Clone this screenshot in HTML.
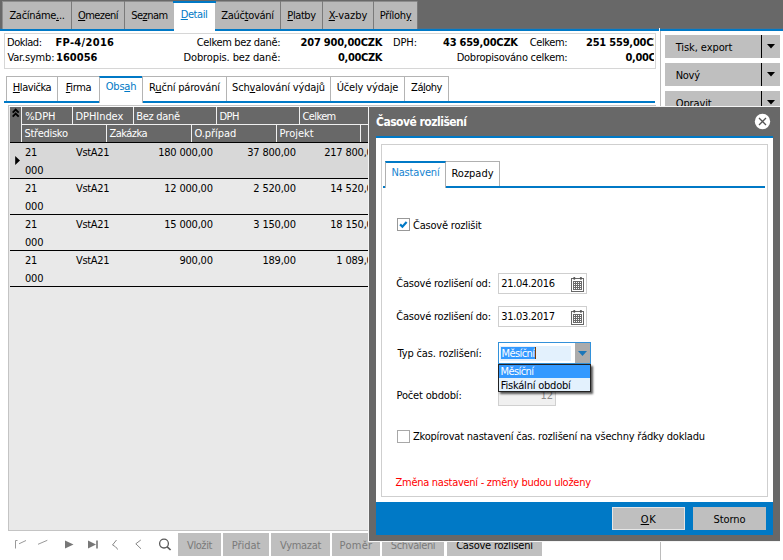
<!DOCTYPE html>
<html lang="cs"><head><meta charset="utf-8"><title>Časové rozlišení</title>
<style>
html,body{margin:0;padding:0;background:#fff;}
body{width:783px;height:560px;position:relative;overflow:hidden;font-family:"DejaVu Sans Condensed","Liberation Sans",sans-serif;font-size:11px;}
div,span.t,svg{position:absolute;}
span.t{white-space:nowrap;font-size:11px;}
span.c{text-align:center;}
span.b{font-weight:bold;}
u{text-decoration:underline;text-underline-offset:1px;}
</style></head><body>
<div style="left:0px;top:0px;width:783px;height:29px;background:#686868;"></div>
<div style="left:0px;top:28px;width:783px;height:1px;background:#5a6d7c;"></div>
<div style="left:3px;top:1px;width:415px;height:28px;background:#7a7a7a;"></div>
<div style="left:3px;top:2px;width:68px;height:27px;background:#b9b9b9;"></div>
<div style="left:3px;top:1px;width:68px;height:1px;background:#8d8d8d;"></div>
<div style="left:72px;top:2px;width:52px;height:27px;background:#b9b9b9;"></div>
<div style="left:72px;top:1px;width:52px;height:1px;background:#8d8d8d;"></div>
<div style="left:125px;top:2px;width:49px;height:27px;background:#b9b9b9;"></div>
<div style="left:125px;top:1px;width:49px;height:1px;background:#8d8d8d;"></div>
<div style="left:215px;top:2px;width:65px;height:27px;background:#b9b9b9;"></div>
<div style="left:215px;top:1px;width:65px;height:1px;background:#8d8d8d;"></div>
<div style="left:281px;top:2px;width:41px;height:27px;background:#b9b9b9;"></div>
<div style="left:281px;top:1px;width:41px;height:1px;background:#8d8d8d;"></div>
<div style="left:323px;top:2px;width:50px;height:27px;background:#b9b9b9;"></div>
<div style="left:323px;top:1px;width:50px;height:1px;background:#8d8d8d;"></div>
<div style="left:374px;top:2px;width:43px;height:27px;background:#b9b9b9;"></div>
<div style="left:374px;top:1px;width:43px;height:1px;background:#8d8d8d;"></div>
<div style="left:0px;top:29px;width:783px;height:2px;background:#0079c6;"></div>
<div style="left:173px;top:1px;width:43px;height:2px;background:#0079c6;"></div>
<div style="left:174px;top:3px;width:41px;height:28px;background:#fff;"></div>
<div style="left:2px;top:1px;width:1px;height:28px;background:#8d8d8d;"></div>
<span class="t" style="top:9px;line-height:13px;font-size:11px;color:#000;left:3px;width:68px;text-align:center;letter-spacing:-0.303px;">Začínáme<u>.</u>..</span>
<span class="t" style="top:9px;line-height:13px;font-size:11px;color:#000;left:72px;width:52px;text-align:center;letter-spacing:-0.555px;"><u>O</u>mezení</span>
<span class="t" style="top:9px;line-height:13px;font-size:11px;color:#000;left:125px;width:49px;text-align:center;letter-spacing:-0.512px;">Se<u>z</u>nam</span>
<span class="t" style="top:8px;line-height:13px;font-size:11px;color:#0079c6;left:173px;width:42px;text-align:center;letter-spacing:-0.431px;"><u>D</u>etail</span>
<span class="t" style="top:9px;line-height:13px;font-size:11px;color:#000;left:215px;width:65px;text-align:center;letter-spacing:-0.299px;">Zaúč<u>t</u>ování</span>
<span class="t" style="top:9px;line-height:13px;font-size:11px;color:#000;left:281px;width:41px;text-align:center;letter-spacing:-0.412px;"><u>P</u>latby</span>
<span class="t" style="top:9px;line-height:13px;font-size:11px;color:#000;left:323px;width:50px;text-align:center;letter-spacing:-0.003px;"><u>X</u>-vazby</span>
<span class="t" style="top:9px;line-height:13px;font-size:11px;color:#000;left:374px;width:43px;text-align:center;letter-spacing:-0.255px;">Příloh<u>y</u></span>
<div style="left:4px;top:33px;width:652px;height:36px;background:#fff;border:1px solid #d6d6d6;box-sizing:border-box;overflow:hidden;"></div>
<span class="t" style="top:36px;line-height:13px;font-size:11px;color:#000;left:7px;letter-spacing:-0.474px;">Doklad:</span>
<span class="t" style="top:36px;line-height:13px;font-size:11px;color:#000;left:55.5px;font-weight:bold;font-family:'DejaVu Sans Condensed','Liberation Sans',sans-serif;letter-spacing:0.314px;">FP-4/2016</span>
<span class="t" style="top:51px;line-height:13px;font-size:11px;color:#000;left:7.5px;letter-spacing:-0.182px;">Var.symb:</span>
<span class="t" style="top:51px;line-height:13px;font-size:11px;color:#000;left:56px;font-weight:bold;font-family:'DejaVu Sans Condensed','Liberation Sans',sans-serif;letter-spacing:0.034px;">160056</span>
<span class="t" style="top:36px;line-height:13px;font-size:11px;color:#000;right:502.5px;letter-spacing:-0.329px;margin-right:0.329px;">Celkem bez daně:</span>
<span class="t" style="top:51px;line-height:13px;font-size:11px;color:#000;right:502.5px;letter-spacing:-0.115px;margin-right:0.115px;">Dobropis. bez daně:</span>
<span class="t" style="top:36px;line-height:13px;font-size:11px;color:#000;right:400.5px;font-weight:bold;font-family:'DejaVu Sans Condensed','Liberation Sans',sans-serif;letter-spacing:-0.201px;margin-right:0.201px;">207 900,00CZK</span>
<span class="t" style="top:51px;line-height:13px;font-size:11px;color:#000;right:400.5px;font-weight:bold;font-family:'DejaVu Sans Condensed','Liberation Sans',sans-serif;letter-spacing:-0.339px;margin-right:0.339px;">0,00CZK</span>
<span class="t" style="top:36px;line-height:13px;font-size:11px;color:#000;left:393px;letter-spacing:-0.125px;">DPH:</span>
<span class="t" style="top:36px;line-height:13px;font-size:11px;color:#000;right:265px;font-weight:bold;font-family:'DejaVu Sans Condensed','Liberation Sans',sans-serif;letter-spacing:-0.229px;margin-right:0.229px;">43 659,00CZK</span>
<span class="t" style="top:36px;line-height:13px;font-size:11px;color:#000;right:215.29999999999995px;letter-spacing:-0.362px;margin-right:0.362px;">Celkem:</span>
<span class="t" style="top:51px;line-height:13px;font-size:11px;color:#000;right:215.29999999999995px;letter-spacing:-0.258px;margin-right:0.258px;">Dobropisováno celkem:</span>
<div style="left:570px;top:34px;width:84px;height:34px;overflow:hidden;">
<span class="t" style="top:2px;line-height:13px;font-size:11px;color:#000;left:16px;font-weight:bold;font-family:'DejaVu Sans Condensed','Liberation Sans',sans-serif;letter-spacing:-0.201px;">251 559,00CZK</span>
<span class="t" style="top:17px;line-height:13px;font-size:11px;color:#000;left:55.5px;font-weight:bold;font-family:'DejaVu Sans Condensed','Liberation Sans',sans-serif;letter-spacing:-0.339px;">0,00CZK</span>
</div>
<div style="left:659px;top:28px;width:1px;height:3px;background:#fff;"></div>
<div style="left:660px;top:31px;width:1px;height:529px;background:#bcbcbc;"></div>
<div style="left:665px;top:35px;width:115px;height:23px;background:#bfbfbf;"></div>
<div style="left:761px;top:35px;width:1px;height:23px;background:#000;"></div>
<svg style="left:767px;top:44px" width="8" height="5" viewBox="0 0 8 5"><path d="M0 0H8L4 4.5Z" fill="#000"/></svg>
<span class="t" style="top:41px;line-height:13px;font-size:11px;color:#000;left:675.75px;letter-spacing:-0.084px;">Tisk, export</span>
<div style="left:665px;top:63px;width:115px;height:23px;background:#bfbfbf;"></div>
<div style="left:761px;top:63px;width:1px;height:23px;background:#000;"></div>
<svg style="left:767px;top:72px" width="8" height="5" viewBox="0 0 8 5"><path d="M0 0H8L4 4.5Z" fill="#000"/></svg>
<span class="t" style="top:69px;line-height:13px;font-size:11px;color:#000;left:675.75px;letter-spacing:-0.307px;">Nový</span>
<div style="left:665px;top:91px;width:115px;height:23px;background:#bfbfbf;"></div>
<div style="left:761px;top:91px;width:1px;height:23px;background:#000;"></div>
<svg style="left:767px;top:100px" width="8" height="5" viewBox="0 0 8 5"><path d="M0 0H8L4 4.5Z" fill="#000"/></svg>
<span class="t" style="top:97px;line-height:13px;font-size:11px;color:#000;left:675.75px;letter-spacing:-0.115px;">Opravit</span>
<div style="left:4px;top:101px;width:651px;height:2px;background:#0079c6;"></div>
<div style="left:6px;top:76px;width:52px;height:25px;background:#fff;border:1px solid #b4b4b4;border-bottom:none;box-sizing:border-box;"></div>
<span class="t" style="top:81px;line-height:13px;font-size:11px;color:#000;left:6px;width:52px;text-align:center;letter-spacing:-0.451px;"><u>H</u>lavička</span>
<div style="left:57px;top:76px;width:43px;height:25px;background:#fff;border:1px solid #b4b4b4;border-bottom:none;box-sizing:border-box;"></div>
<span class="t" style="top:81px;line-height:13px;font-size:11px;color:#000;left:57px;width:43px;text-align:center;letter-spacing:-0.371px;"><u>F</u>irma</span>
<div style="left:99px;top:76px;width:44px;height:27px;background:#fff;border:1px solid #b4b4b4;border-top:2px solid #0079c6;border-bottom:none;box-sizing:border-box;"></div>
<span class="t" style="top:80px;line-height:13px;font-size:11px;color:#0079c6;left:99px;width:44px;text-align:center;letter-spacing:-0.207px;">Obs<u>a</u>h</span>
<div style="left:142px;top:76px;width:85px;height:25px;background:#fff;border:1px solid #b4b4b4;border-bottom:none;box-sizing:border-box;"></div>
<span class="t" style="top:81px;line-height:13px;font-size:11px;color:#000;left:142px;width:85px;text-align:center;letter-spacing:-0.188px;">R<u>u</u>ční párování</span>
<div style="left:226px;top:76px;width:105px;height:25px;background:#fff;border:1px solid #b4b4b4;border-bottom:none;box-sizing:border-box;"></div>
<span class="t" style="top:81px;line-height:13px;font-size:11px;color:#000;left:226px;width:105px;text-align:center;letter-spacing:-0.170px;">Sch<u>v</u>alování výdajů</span>
<div style="left:330px;top:76px;width:75px;height:25px;background:#fff;border:1px solid #b4b4b4;border-bottom:none;box-sizing:border-box;"></div>
<span class="t" style="top:81px;line-height:13px;font-size:11px;color:#000;left:330px;width:75px;text-align:center;letter-spacing:-0.152px;">Účely výda<u>j</u>e</span>
<div style="left:404px;top:76px;width:45px;height:25px;background:#fff;border:1px solid #b4b4b4;border-bottom:none;box-sizing:border-box;"></div>
<span class="t" style="top:81px;line-height:13px;font-size:11px;color:#000;left:404px;width:45px;text-align:center;letter-spacing:-0.506px;">Zá<u>l</u>ohy</span>
<div style="left:8px;top:105px;width:648px;height:426px;background:#e9e9e9;border:1px solid #c4c4c4;box-sizing:border-box;"></div>
<div style="left:9px;top:106px;width:646px;height:1px;background:#fff;"></div>
<div style="left:10px;top:107px;width:645px;height:35px;background:#686868;"></div>
<div style="left:21px;top:107px;width:1px;height:17px;background:#f0f0f0;"></div>
<div style="left:72px;top:107px;width:1px;height:17px;background:#f0f0f0;"></div>
<div style="left:133px;top:107px;width:1px;height:17px;background:#f0f0f0;"></div>
<div style="left:216px;top:107px;width:1px;height:17px;background:#f0f0f0;"></div>
<div style="left:299px;top:107px;width:1px;height:17px;background:#f0f0f0;"></div>
<div style="left:21px;top:124px;width:1px;height:18px;background:#f0f0f0;"></div>
<div style="left:106px;top:124px;width:1px;height:18px;background:#f0f0f0;"></div>
<div style="left:191px;top:124px;width:1px;height:18px;background:#f0f0f0;"></div>
<div style="left:276px;top:124px;width:1px;height:18px;background:#f0f0f0;"></div>
<div style="left:360px;top:124px;width:1px;height:18px;background:#f0f0f0;"></div>
<div style="left:21px;top:124px;width:400px;height:1px;background:#f0f0f0;"></div>
<div style="left:10px;top:142px;width:645px;height:1px;background:#000;"></div>
<span class="t" style="top:110px;line-height:13px;font-size:11px;color:#fff;left:25.3px;letter-spacing:-0.084px;">%DPH</span>
<span class="t" style="top:110px;line-height:13px;font-size:11px;color:#fff;left:75.5px;letter-spacing:-0.067px;">DPHIndex</span>
<span class="t" style="top:110px;line-height:13px;font-size:11px;color:#fff;left:136.25px;letter-spacing:-0.312px;">Bez daně</span>
<span class="t" style="top:110px;line-height:13px;font-size:11px;color:#fff;left:219.5px;letter-spacing:-0.523px;">DPH</span>
<span class="t" style="top:110px;line-height:13px;font-size:11px;color:#fff;left:302.5px;letter-spacing:-0.616px;">Celkem</span>
<span class="t" style="top:127px;line-height:13px;font-size:11px;color:#fff;left:24.5px;letter-spacing:-0.271px;">Středisko</span>
<span class="t" style="top:127px;line-height:13px;font-size:11px;color:#fff;left:109.5px;letter-spacing:-0.542px;">Zakázka</span>
<span class="t" style="top:127px;line-height:13px;font-size:11px;color:#fff;left:194.5px;letter-spacing:-0.067px;">O.případ</span>
<span class="t" style="top:127px;line-height:13px;font-size:11px;color:#fff;left:279.5px;letter-spacing:0.023px;">Projekt</span>
<svg style="left:11px;top:108px" width="10" height="11" viewBox="0 0 10 11"><path d="M1.7 4.6L4.7 1.6L7.7 4.6M1.7 8.6L4.7 5.6L7.7 8.6" stroke="#000" stroke-width="1.9" fill="none"/></svg>
<div style="left:10px;top:143px;width:645px;height:35px;background:#d8d8d8;"></div>
<div style="left:10px;top:178px;width:645px;height:1px;background:#000;"></div>
<span class="t" style="top:146px;line-height:13px;font-size:11px;color:#000;left:25px;letter-spacing:-0.200px;">21</span>
<span class="t" style="top:146px;line-height:13px;font-size:11px;color:#000;left:76px;letter-spacing:-0.334px;">VstA21</span>
<span class="t" style="top:146px;line-height:13px;font-size:11px;color:#000;right:570px;letter-spacing:-0.200px;margin-right:0.200px;">180 000,00</span>
<span class="t" style="top:146px;line-height:13px;font-size:11px;color:#000;right:487px;letter-spacing:-0.200px;margin-right:0.200px;">37 800,00</span>
<span class="t" style="top:146px;line-height:13px;font-size:11px;color:#000;right:404px;letter-spacing:-0.200px;margin-right:0.200px;">217 800,00</span>
<span class="t" style="top:164px;line-height:13px;font-size:11px;color:#000;left:25px;letter-spacing:-0.200px;">000</span>
<div style="left:10px;top:214px;width:645px;height:1px;background:#000;"></div>
<span class="t" style="top:182px;line-height:13px;font-size:11px;color:#000;left:25px;letter-spacing:-0.200px;">21</span>
<span class="t" style="top:182px;line-height:13px;font-size:11px;color:#000;left:76px;letter-spacing:-0.334px;">VstA21</span>
<span class="t" style="top:182px;line-height:13px;font-size:11px;color:#000;right:570px;letter-spacing:-0.200px;margin-right:0.200px;">12 000,00</span>
<span class="t" style="top:182px;line-height:13px;font-size:11px;color:#000;right:487px;letter-spacing:-0.200px;margin-right:0.200px;">2 520,00</span>
<span class="t" style="top:182px;line-height:13px;font-size:11px;color:#000;right:404px;letter-spacing:-0.200px;margin-right:0.200px;">14 520,00</span>
<span class="t" style="top:200px;line-height:13px;font-size:11px;color:#000;left:25px;letter-spacing:-0.200px;">000</span>
<div style="left:10px;top:250px;width:645px;height:1px;background:#000;"></div>
<span class="t" style="top:218px;line-height:13px;font-size:11px;color:#000;left:25px;letter-spacing:-0.200px;">21</span>
<span class="t" style="top:218px;line-height:13px;font-size:11px;color:#000;left:76px;letter-spacing:-0.334px;">VstA21</span>
<span class="t" style="top:218px;line-height:13px;font-size:11px;color:#000;right:570px;letter-spacing:-0.200px;margin-right:0.200px;">15 000,00</span>
<span class="t" style="top:218px;line-height:13px;font-size:11px;color:#000;right:487px;letter-spacing:-0.200px;margin-right:0.200px;">3 150,00</span>
<span class="t" style="top:218px;line-height:13px;font-size:11px;color:#000;right:404px;letter-spacing:-0.200px;margin-right:0.200px;">18 150,00</span>
<span class="t" style="top:236px;line-height:13px;font-size:11px;color:#000;left:25px;letter-spacing:-0.200px;">000</span>
<div style="left:10px;top:286px;width:645px;height:1px;background:#000;"></div>
<span class="t" style="top:254px;line-height:13px;font-size:11px;color:#000;left:25px;letter-spacing:-0.200px;">21</span>
<span class="t" style="top:254px;line-height:13px;font-size:11px;color:#000;left:76px;letter-spacing:-0.334px;">VstA21</span>
<span class="t" style="top:254px;line-height:13px;font-size:11px;color:#000;right:570px;letter-spacing:-0.200px;margin-right:0.200px;">900,00</span>
<span class="t" style="top:254px;line-height:13px;font-size:11px;color:#000;right:487px;letter-spacing:-0.200px;margin-right:0.200px;">189,00</span>
<span class="t" style="top:254px;line-height:13px;font-size:11px;color:#000;right:404px;letter-spacing:-0.200px;margin-right:0.200px;">1 089,00</span>
<span class="t" style="top:272px;line-height:13px;font-size:11px;color:#000;left:25px;letter-spacing:-0.200px;">000</span>
<svg style="left:14px;top:155px" width="7" height="11" viewBox="0 0 7 11"><path d="M1.2 1L6 5.5L1.2 10Z" fill="#000"/></svg>
<svg style="left:10px;top:533px" width="170" height="24" viewBox="0 0 170 24" fill="none" stroke="#777" stroke-width="1">
<path d="M5.5 15.5V7.5H7.5M9 10.8L16 7.5" stroke="#999"/>
<path d="M28 11.3L37.3 7.3" stroke="#999"/>
<path d="M55 7.5L63.5 11.5L55 15.5Z" fill="#777" stroke="none"/>
<path d="M78 7.5L86 11.5L78 15.5Z" fill="#777" stroke="none"/><path d="M87 7.5V15.5" stroke-width="1.6"/>
<path d="M106.5 7L102.5 12C104.5 13 107 14.5 107.5 16.5" stroke="#888"/>
<path d="M130.8 7L125.8 10.8L131 15.8" stroke="#888"/>
<circle cx="154" cy="10.6" r="4.4" stroke="#5a5a5a" stroke-width="1.3"/><path d="M157.2 13.8L160.6 17" stroke="#5a5a5a" stroke-width="1.7"/>
</svg>
<div style="left:178px;top:533px;width:43px;height:23px;background:#bfbfbf;"></div>
<span class="t" style="top:539px;line-height:13px;font-size:11px;color:#7a7a7a;left:178px;width:43px;text-align:center;letter-spacing:-0.421px;">Vložit</span>
<div style="left:223px;top:533px;width:46px;height:23px;background:#bfbfbf;"></div>
<span class="t" style="top:539px;line-height:13px;font-size:11px;color:#7a7a7a;left:223px;width:46px;text-align:center;letter-spacing:-0.026px;">Přidat</span>
<div style="left:271px;top:533px;width:59px;height:23px;background:#bfbfbf;"></div>
<span class="t" style="top:539px;line-height:13px;font-size:11px;color:#7a7a7a;left:271px;width:59px;text-align:center;letter-spacing:-0.312px;">Vymazat</span>
<div style="left:332px;top:533px;width:48px;height:23px;background:#bfbfbf;"></div>
<span class="t" style="top:539px;line-height:13px;font-size:11px;color:#7a7a7a;left:332px;width:48px;text-align:center;letter-spacing:0.291px;">Poměr</span>
<div style="left:382px;top:533px;width:62px;height:23px;background:#bfbfbf;"></div>
<span class="t" style="top:539px;line-height:13px;font-size:11px;color:#7a7a7a;left:382px;width:62px;text-align:center;letter-spacing:-0.385px;">Schválení</span>
<div style="left:447px;top:533px;width:95px;height:23px;background:#bfbfbf;"></div>
<span class="t" style="top:539px;line-height:13px;font-size:11px;color:#000;left:447px;width:95px;text-align:center;letter-spacing:-0.215px;">Časové rozlišení</span>
<div style="left:368px;top:106px;width:412px;height:436px;background:#686868;border-left:1px solid #f4f4f4;border-top:1px solid #f4f4f4;border-bottom:1px solid #f4f4f4;box-sizing:border-box;"></div>
<span class="t" style="top:115px;line-height:14px;font-size:12px;color:#fff;left:376px;font-weight:bold;font-family:'DejaVu Sans Condensed','Liberation Sans',sans-serif;letter-spacing:-0.516px;">Časové rozlišení</span>
<svg style="left:754px;top:113px" width="17" height="17" viewBox="0 0 17 17"><circle cx="8.5" cy="8.5" r="7.7" fill="#fff"/><path d="M5 5L12 12M12 5L5 12" stroke="#555" stroke-width="1.3"/></svg>
<div style="left:376px;top:136px;width:397px;height:399px;background:#0079c6;"></div>
<div style="left:376px;top:138px;width:397px;height:364px;background:#fff;"></div>
<div style="left:381px;top:144px;width:387px;height:353px;background:#fff;border:1px solid #cfcfcf;box-sizing:border-box;"></div>
<div style="left:383px;top:186px;width:382px;height:2px;background:#0079c6;"></div>
<div style="left:385px;top:161px;width:61px;height:27px;background:#fff;border-top:2px solid #0079c6;border-right:1px solid #b0b0b0;border-left:1px solid #b0b0b0;box-sizing:border-box;"></div>
<div style="left:446px;top:161px;width:54px;height:25px;background:#fff;border:1px solid #b0b0b0;border-left:none;border-bottom:none;box-sizing:border-box;"></div>
<span class="t" style="top:166px;line-height:13px;font-size:11px;color:#1583d0;left:386px;width:59px;text-align:center;letter-spacing:-0.156px;">Nastavení</span>
<span class="t" style="top:167px;line-height:13px;font-size:11px;color:#000;left:446px;width:53px;text-align:center;letter-spacing:-0.004px;">Rozpady</span>
<div style="left:397px;top:218px;width:13px;height:13px;background:#fff;border:1px solid #989898;box-sizing:border-box;"></div>
<svg style="left:397px;top:218px" width="13" height="13" viewBox="0 0 13 13"><path d="M3.1 6.4L5.4 8.7L9.6 4" stroke="#0079c6" stroke-width="2.2" fill="none"/></svg>
<span class="t" style="top:219px;line-height:13px;font-size:11px;color:#000;left:413px;letter-spacing:-0.206px;">Časově rozlišit</span>
<span class="t" style="top:277px;line-height:13px;font-size:11px;color:#000;left:396.3px;letter-spacing:-0.223px;">Časové rozlišení od:</span>
<div style="left:498px;top:273px;width:89px;height:21px;background:#fff;border:1px solid #cfcfcf;box-sizing:border-box;"></div>
<span class="t" style="top:277px;line-height:13px;font-size:11px;color:#000;left:501.25px;letter-spacing:-0.323px;">21.04.2016</span>
<svg style="left:570px;top:276px" width="15" height="17" viewBox="0 0 15 17"><rect x="1.5" y="2.5" width="12" height="13" fill="#fff" stroke="#686868"/><rect x="3.3" y="0.9" width="2" height="2.8" rx="0.9" fill="#555"/><rect x="9.9" y="0.9" width="2" height="2.8" rx="0.9" fill="#555"/><rect x="3" y="5" width="9" height="9" fill="#6a6a6a"/><g fill="#fff"><rect x="4" y="6" width="1" height="1"/><rect x="6" y="6" width="1" height="1"/><rect x="8" y="6" width="1" height="1"/><rect x="10" y="6" width="1" height="1"/><rect x="4" y="8" width="1" height="1"/><rect x="6" y="8" width="1" height="1"/><rect x="8" y="8" width="1" height="1"/><rect x="10" y="8" width="1" height="1"/><rect x="4" y="10" width="1" height="1"/><rect x="6" y="10" width="1" height="1"/><rect x="8" y="10" width="1" height="1"/><rect x="10" y="10" width="1" height="1"/><rect x="4" y="12" width="1" height="1"/><rect x="6" y="12" width="1" height="1"/><rect x="8" y="12" width="1" height="1"/><rect x="10" y="12" width="1" height="1"/></g></svg>
<span class="t" style="top:310px;line-height:13px;font-size:11px;color:#000;left:396.3px;letter-spacing:-0.223px;">Časové rozlišení do:</span>
<div style="left:498px;top:306px;width:89px;height:21px;background:#fff;border:1px solid #cfcfcf;box-sizing:border-box;"></div>
<span class="t" style="top:310px;line-height:13px;font-size:11px;color:#000;left:501.25px;letter-spacing:-0.323px;">31.03.2017</span>
<svg style="left:570px;top:309px" width="15" height="17" viewBox="0 0 15 17"><rect x="1.5" y="2.5" width="12" height="13" fill="#fff" stroke="#686868"/><rect x="3.3" y="0.9" width="2" height="2.8" rx="0.9" fill="#555"/><rect x="9.9" y="0.9" width="2" height="2.8" rx="0.9" fill="#555"/><rect x="3" y="5" width="9" height="9" fill="#6a6a6a"/><g fill="#fff"><rect x="4" y="6" width="1" height="1"/><rect x="6" y="6" width="1" height="1"/><rect x="8" y="6" width="1" height="1"/><rect x="10" y="6" width="1" height="1"/><rect x="4" y="8" width="1" height="1"/><rect x="6" y="8" width="1" height="1"/><rect x="8" y="8" width="1" height="1"/><rect x="10" y="8" width="1" height="1"/><rect x="4" y="10" width="1" height="1"/><rect x="6" y="10" width="1" height="1"/><rect x="8" y="10" width="1" height="1"/><rect x="10" y="10" width="1" height="1"/><rect x="4" y="12" width="1" height="1"/><rect x="6" y="12" width="1" height="1"/><rect x="8" y="12" width="1" height="1"/><rect x="10" y="12" width="1" height="1"/></g></svg>
<span class="t" style="top:347px;line-height:13px;font-size:11px;color:#000;left:397.5px;letter-spacing:-0.138px;">Typ čas. rozlišení:</span>
<div style="left:498px;top:342px;width:93px;height:22px;background:#fff;border:1px solid #3291da;box-sizing:border-box;"></div>
<div style="left:500px;top:346px;width:71px;height:15px;background:#e3f1fd;"></div>
<div style="left:501px;top:347px;width:35px;height:12px;background:#3399ff;"></div>
<span class="t" style="top:347px;line-height:13px;font-size:11px;color:#fff;left:501.5px;letter-spacing:-0.586px;">Měsíční</span>
<div style="left:535px;top:347px;width:1px;height:12px;background:#7a3a00;"></div>
<div style="left:575px;top:343px;width:15px;height:20px;background:#ababab;"></div>
<svg style="left:578px;top:351px" width="9" height="6" viewBox="0 0 9 6"><path d="M0 0H9L4.5 5Z" fill="#1b76b8"/></svg>
<span class="t" style="top:389px;line-height:13px;font-size:11px;color:#000;left:396.5px;letter-spacing:-0.165px;">Počet období:</span>
<div style="left:498px;top:385px;width:58px;height:21px;background:#f0f0f0;border:1px solid #d0d0d0;box-sizing:border-box;"></div>
<span class="t" style="top:389px;line-height:13px;font-size:11px;color:#8c8c8c;right:230px;letter-spacing:-0.200px;margin-right:0.200px;">12</span>
<div style="left:498px;top:364px;width:93px;height:28px;background:#e3f1fd;border:1px solid #222;box-sizing:border-box;box-shadow:2px 2px 2px rgba(0,0,0,0.65);"></div>
<div style="left:499px;top:365px;width:91px;height:13px;background:#3399ff;"></div>
<span class="t" style="top:365px;line-height:13px;font-size:11px;color:#fff;left:500.5px;letter-spacing:-0.586px;">Měsíční</span>
<span class="t" style="top:379px;line-height:13px;font-size:11px;color:#000;left:500.8px;letter-spacing:-0.217px;">Fiskální období</span>
<div style="left:397px;top:430px;width:13px;height:13px;background:#fff;border:1px solid #a8a8a8;box-sizing:border-box;"></div>
<span class="t" style="top:430px;line-height:13px;font-size:11px;color:#000;left:413px;letter-spacing:-0.208px;">Zkopírovat nastavení čas. rozlišení na všechny řádky dokladu</span>
<span class="t" style="top:476px;line-height:13px;font-size:11px;color:#ff0000;left:395.5px;letter-spacing:-0.271px;">Změna nastavení - změny budou uloženy</span>
<div style="left:612px;top:507px;width:73px;height:23px;background:#bfbfbf;border:1px solid #e6e6e6;box-sizing:border-box;"></div>
<div style="left:693px;top:507px;width:73px;height:23px;background:#bfbfbf;"></div>
<span class="t" style="top:513px;line-height:13px;font-size:11px;color:#000;left:612px;width:73px;text-align:center;letter-spacing:0.719px;"><u>O</u>K</span>
<span class="t" style="top:513px;line-height:13px;font-size:11px;color:#000;left:693px;width:73px;text-align:center;letter-spacing:-0.084px;">Storno</span>
</body></html>
